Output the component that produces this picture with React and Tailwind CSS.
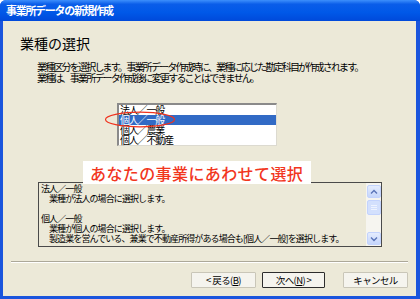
import React from "react";

const F = { fontFamily: '"Noto Sans CJK JP", "Noto Sans", sans-serif' };

function ScrollBtn({ up }) {
  return (
    <div className="h-[13px] w-[14px] rounded-[2px] border border-[#c3d3fd] bg-[linear-gradient(180deg,#e4ecfe,#c6d6fb)] flex items-center justify-center">
      <svg width="8" height="6" viewBox="0 0 8 6">
        <path d={up ? "M1 4.5 L4 1.5 L7 4.5" : "M1 1.5 L4 4.5 L7 1.5"} fill="none" stroke="#5a74b8" strokeWidth="1.4" />
      </svg>
    </div>
  );
}

export default function App() {
  return (
    <div className="w-[420px] h-[299px] bg-white overflow-hidden" style={F}>
      <div className="w-[420px] h-[299px] flex flex-col bg-[#1a55dd] rounded-t-[6px] overflow-hidden">
        <div className="h-[21px] shrink-0 flex items-center pl-[6px] bg-[linear-gradient(180deg,#3d8ffc_0%,#0a5de9_20%,#0058e8_60%,#0049da_100%)]">
          <span className="text-white font-bold text-[11px] tracking-[-1.3px] leading-none">事業所データの新規作成</span>
        </div>
        <div className="relative flex-1 ml-[3px] mr-[4px] mb-[3px] bg-[#ECE9D8] flex flex-col">
          <div className="mt-[14px] pl-[17px] text-[14px] leading-[16px] text-black">業種の選択</div>
          <div className="mt-[10px] pl-[34px] text-[10px] leading-[11px] tracking-[-1.8px] text-black">
            <div>業種区分を選択します。事業所データ作成時に、業種に応じた勘定科目が作成されます。</div>
            <div>業種は、事業所データ作成後に変更することはできません。</div>
          </div>
          <div className="mt-[20px] ml-[114px] w-[160px] h-[43px] bg-white border-t-2 border-l-2 border-t-[#8a8a8a] border-l-[#8a8a8a] border-r border-b border-r-[#dcdad0] border-b-[#dcdad0] text-[10px] leading-[10px] tracking-[-1.2px] text-black">
            <div className="h-[10px] pl-[1px]">法人／一般</div>
            <div className="h-[10px] pl-[1px] bg-[#316ac5] text-white">個人／一般</div>
            <div className="h-[10px] pl-[1px]">個人／農業</div>
            <div className="h-[10px] pl-[1px]">個人／不動産</div>
          </div>
          <div className="mt-[36px] ml-[35px] w-[344px] h-[65px] border border-[#4a4a4a] flex text-[9px] leading-[10px] tracking-[-0.9px] text-black">
            <div className="flex-1 pl-[2px] pt-[1px]">
              <div>法人／一般</div>
              <div className="pl-[8px]">業種が法人の場合に選択します。</div>
              <div className="h-[10px]"></div>
              <div>個人／一般</div>
              <div className="pl-[8px]">業種が個人の場合に選択します。</div>
              <div className="pl-[8px]">製造業を営んでいる、兼業で不動産所得がある場合も[個人／一般]を選択します。</div>
            </div>
            <div className="w-[15px] flex flex-col items-center pt-[2px] pb-[1px] bg-[#f6f5f0]">
              <ScrollBtn up />
              <div className="mt-[2px] h-[15px] w-[14px] rounded-[2px] border border-[#c3d3fd] bg-[#d3e0fd] flex flex-col items-center justify-center gap-[1px]">
                <div className="w-[6px] h-px bg-[#eef3ff]"></div>
                <div className="w-[6px] h-px bg-[#eef3ff]"></div>
                <div className="w-[6px] h-px bg-[#eef3ff]"></div>
              </div>
              <div className="flex-1"></div>
              <ScrollBtn />
            </div>
          </div>
          <div className="mt-[14px] mx-[8px] border-t border-t-[#aca899] border-b border-b-white"></div>
          <div className="mt-[9px] flex justify-end pr-[8px] text-[9.5px] tracking-[-0.6px] text-black">
            <div className="w-[65px] h-[16px] flex items-center justify-center border border-[#c9c6b8] bg-[#f5f4ee] rounded-[1px]">&lt; 戻る(<span className="underline">B</span>)</div>
            <div className="ml-[6px] w-[63px] h-[16px] flex items-center justify-center border border-[#2d2d2d] bg-[#f5f4ee] rounded-[1px]">次へ(<span className="underline">N</span>) &gt;</div>
            <div className="ml-[18px] w-[65px] h-[16px] flex items-center justify-center border border-[#c9c6b8] bg-[#f5f4ee] rounded-[1px]">キャンセル</div>
          </div>

          <svg className="absolute left-[101px] top-[90px]" width="72" height="17" viewBox="0 0 72 17">
            <ellipse cx="36" cy="8.5" rx="34.5" ry="7.3" fill="none" stroke="#f0321e" strokeWidth="1.2" />
          </svg>
          <div className="absolute left-[80px] top-[140px] w-[228px] h-[23px] bg-white flex items-center pl-[7px] text-[16px] tracking-[0.4px] text-[#f2361e] leading-none font-medium">
            あなたの事業にあわせて選択
          </div>
        </div>
      </div>
    </div>
  );
}
